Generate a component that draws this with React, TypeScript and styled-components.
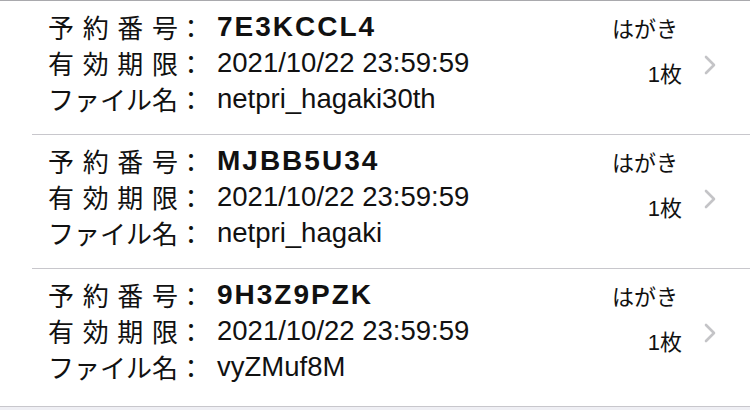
import React from 'react';
import styled, { createGlobalStyle } from 'styled-components';

// #region ====== style ===
const GlobalStyle = createGlobalStyle`
    html, body {
        margin: 0;
        padding: 0;
        background: #efeff4;
    }

    body {
        font-family: 'Liberation Sans', 'Noto Sans CJK JP', sans-serif;
        color: #111;
        -webkit-font-smoothing: antialiased;
    }
`;

const Page = styled.div`
    width: 750px;
    height: 410px;
    background: #efeff4;
    overflow: hidden;
`;

const List = styled.ul`
    list-style: none;
    margin: 0;
    padding: 0 0 4px;
    background: #fff;
    border-top: 1px solid #a9a9ad;
    border-bottom: 1px solid #c8c7cc;
`;

const Item = styled.li`
    margin-left: 32px;
    border-bottom: 1px solid #c8c7cc;

    &:last-child {
        border-bottom: 0;
    }
`;

const Row = styled.div`
    display: flex;
    height: 133px;
    box-sizing: border-box;
    padding: 8px 0 14px 16px;
`;

const Fields = styled.dl`
    flex: 1;
    display: grid;
    grid-template-columns: 130px 26px 1fr;
    grid-auto-rows: 36px;
    align-items: center;
    margin: 0;
`;

const LabelName = styled.dt`
    font-family: 'Noto Sans CJK JP', sans-serif;
    font-size: 26px;
    line-height: 36px;
    text-align: justify;
    text-align-last: justify;
    white-space: nowrap;
`;

const Colon = styled.span`
    font-family: 'Noto Sans CJK JP', sans-serif;
    font-size: 26px;
    line-height: 36px;
`;

const Value = styled.dd<{ $strong?: boolean }>`
    margin: 0 0 0 13px;
    font-size: ${p => (p.$strong ? '28px' : '27.5px')};
    line-height: 36px;
    font-weight: ${p => (p.$strong ? 700 : 400)};
    letter-spacing: ${p => (p.$strong ? '2px' : '0')};
    white-space: nowrap;
`;

const Side = styled.div`
    display: flex;
    flex-direction: column;
    align-items: flex-end;
`;

const Kind = styled.span`
    font-family: 'Noto Sans CJK JP', sans-serif;
    font-size: 22px;
    line-height: 37px;
    margin-right: 4px;
`;

const Count = styled.span`
    margin-top: 8px;
    font-size: 22px;
    line-height: 37px;
`;

const CountUnit = styled.span`
    font-family: 'Noto Sans CJK JP', sans-serif;
`;

const Chevron = styled.svg`
    align-self: center;
    flex: none;
    margin: 0 34px 0 22px;
`;
// #endregion === style ===

type Reservation = {
    code: string;
    expires: string;
    file: string;
    kind: string;
    count: number;
};

const reservations: Reservation[] = [
    { code: '7E3KCCL4', expires: '2021/10/22 23:59:59', file: 'netpri_hagaki30th', kind: 'はがき', count: 1 },
    { code: 'MJBB5U34', expires: '2021/10/22 23:59:59', file: 'netpri_hagaki', kind: 'はがき', count: 1 },
    { code: '9H3Z9PZK', expires: '2021/10/22 23:59:59', file: 'vyZMuf8M', kind: 'はがき', count: 1 },
];

const Field: React.FC<{ label: string; value: string; strong?: boolean }> = ({ label, value, strong }) => (
    <>
        <LabelName>{label}</LabelName>
        <Colon>：</Colon>
        <Value $strong={strong}>{value}</Value>
    </>
);

const ChevronIcon = () => (
    <Chevron width="12" height="20" viewBox="0 0 12 20" fill="none">
        <polyline points="2,2 10,10 2,18" stroke="#c4c4c7" strokeWidth="2.6" strokeLinecap="round" strokeLinejoin="round" />
    </Chevron>
);

export default function App() {
    return (
        <Page>
            <GlobalStyle />
            <List>
                {reservations.map(item => (
                    <Item key={item.code}>
                        <Row>
                            <Fields>
                                <Field label="予約番号" value={item.code} strong />
                                <Field label="有効期限" value={item.expires} />
                                <Field label="ファイル名" value={item.file} />
                            </Fields>
                            <Side>
                                <Kind>{item.kind}</Kind>
                                <Count>
                                    {item.count}
                                    <CountUnit>枚</CountUnit>
                                </Count>
                            </Side>
                            <ChevronIcon />
                        </Row>
                    </Item>
                ))}
            </List>
        </Page>
    );
}
